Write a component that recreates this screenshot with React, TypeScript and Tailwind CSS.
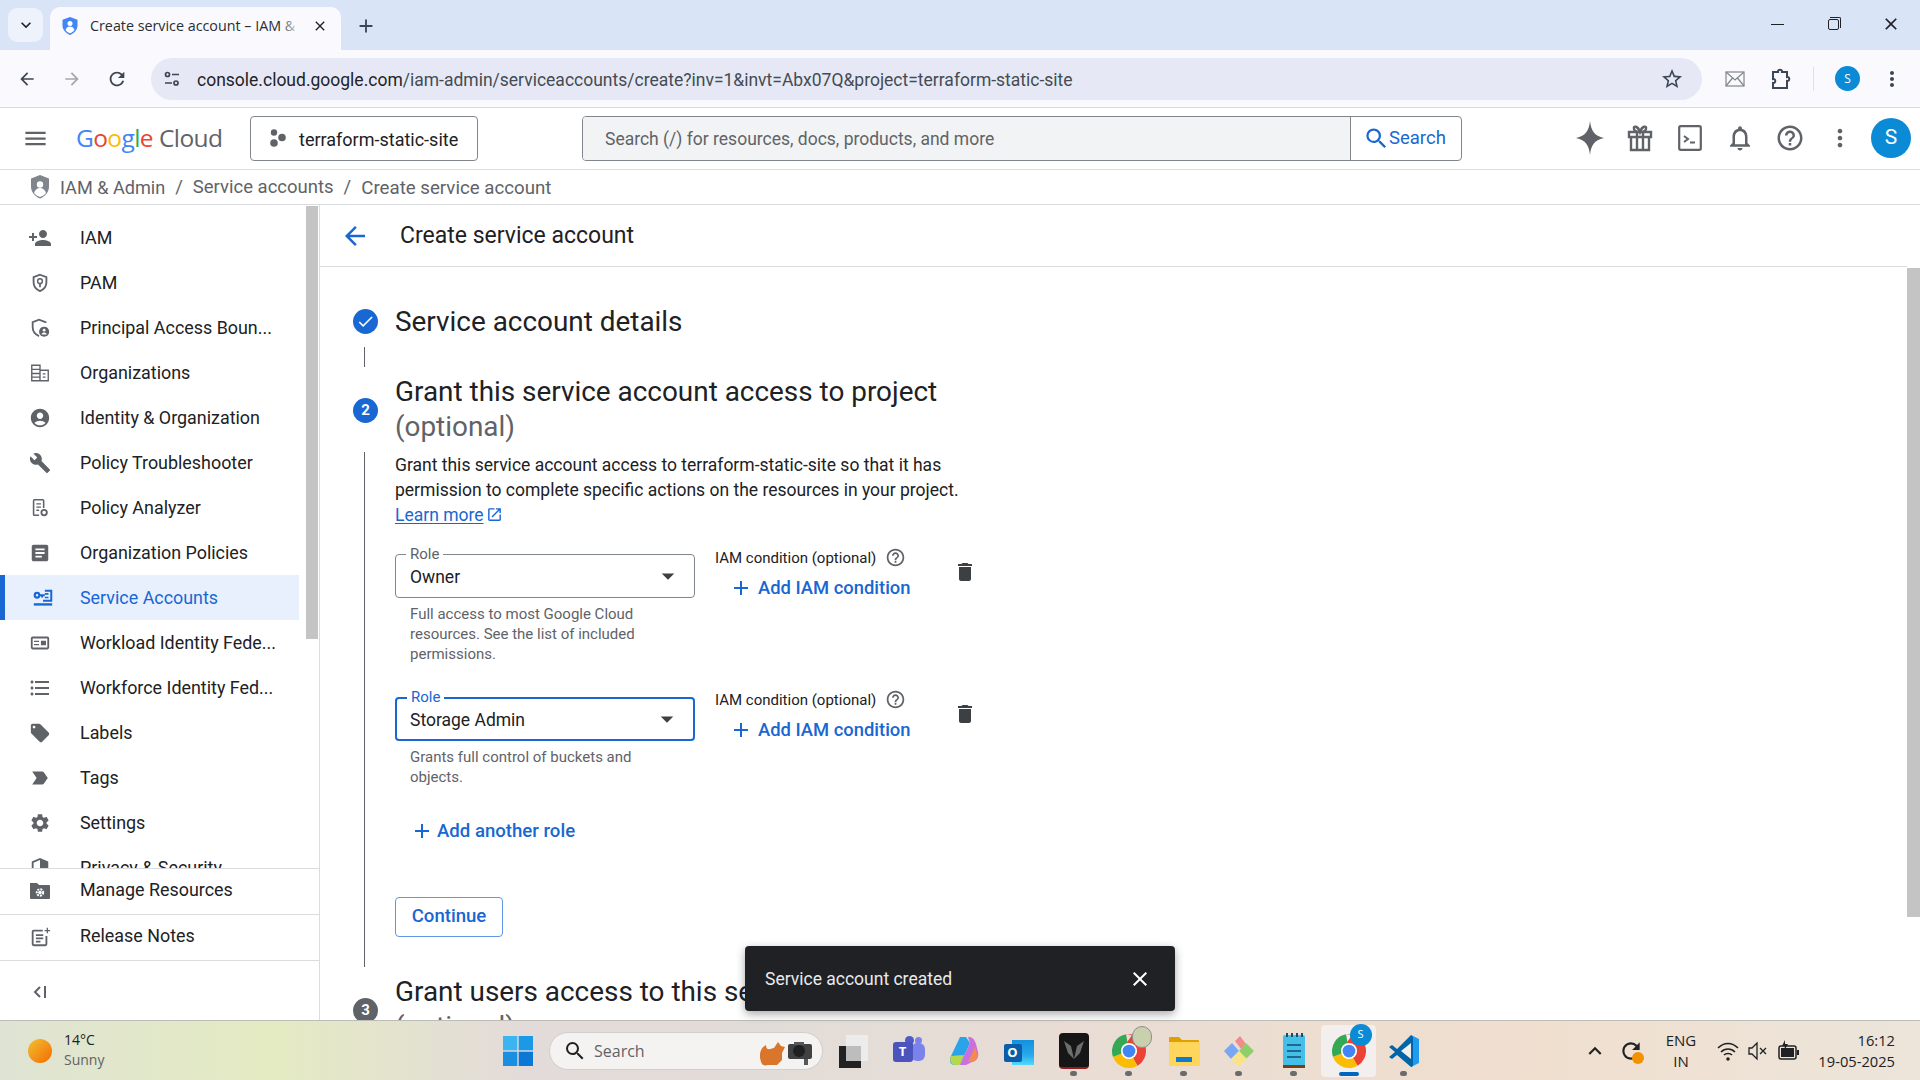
import type { ReactNode } from "react";
import {
	MdAccountCircle,
	MdAdd,
	MdArrowBack,
	MdArrowDropDown,
	MdArticle,
	MdBuild,
	MdCheck,
	MdClose,
	MdDelete,
	MdFormatListBulleted,
	MdHelpOutline,
	MdLabelImportant,
	MdLocalOffer,
	MdMenu,
	MdMoreVert,
	MdOpenInNew,
	MdOutlineNotifications,
	MdPersonAdd,
	MdRefresh,
	MdSearch,
	MdSecurity,
	MdSettings,
	MdStarBorder,
	MdKeyboardArrowDown,
	MdKeyboardArrowUp,
	MdArrowForward,
} from "react-icons/md";

const grey = "#5f6368";

function PamIcon() {
	return (
		<svg width="22" height="22" viewBox="0 0 24 24" fill="none">
			<path d="M12 3l7 2.6v5.6c0 4.4-3 8-7 9.6-4-1.6-7-5.2-7-9.6V5.6z" stroke={grey} strokeWidth="2" />
			<circle cx="12" cy="10" r="2.6" stroke={grey} strokeWidth="1.6" />
			<path d="M12 12.5v4" stroke={grey} strokeWidth="1.8" />
		</svg>
	);
}

function BoundaryIcon() {
	return (
		<svg width="22" height="22" viewBox="0 0 24 24" fill="none">
			<path d="M18 6.5V5.6L11 3 4 5.6v5.6c0 4.4 3 8 7 9.6" stroke={grey} strokeWidth="2" />
			<circle cx="16.5" cy="16" r="5.5" fill={grey} />
			<circle cx="16.5" cy="14.4" r="1.5" fill="#fff" />
			<path d="M13.6 19c.5-1.500 1.700-2.200 2.900-2.200s2.400.7 2.900 2.200z" fill="#fff" />
		</svg>
	);
}

function OrgIcon() {
	return (
		<svg width="22" height="22" viewBox="0 0 24 24" fill="none" stroke={grey} strokeWidth="1.500">
			<path d="M3 3.500h9v17H3zM12 9h9v11.500h-9zM3 8h9M3 12.500h9M3 16.500h9M15 13h3M15 16.500h3" />
		</svg>
	);
}

function AnalyzerIcon() {
	return (
		<svg width="22" height="22" viewBox="0 0 24 24" fill="none" stroke={grey}>
			<path d="M11 20H6a1 1 0 0 1-1-1V4a1 1 0 0 1 1-1h9a1 1 0 0 1 1 1v8" strokeWidth="1.700" />
			<path d="M8 7.500h5M8 11h5M8 14.500h3" strokeWidth="1.500" />
			<circle cx="16.500" cy="17" r="3" strokeWidth="2" />
		</svg>
	);
}

function ServiceIcon() {
	return (
		<svg width="22" height="22" viewBox="0 0 24 24" fill="none" stroke="#1967d2">
			<circle cx="5.500" cy="9" r="2.500" strokeWidth="2.400" />
			<path d="M8 9h6M11 9v2.500M14 4h7v11h-9" strokeWidth="2.200" />
			<path d="M14 7.500h4M14 11.500h4" strokeWidth="1.800" />
			<path d="M2 19h20" strokeWidth="2.600" />
		</svg>
	);
}

function WorkloadIcon() {
	return (
		<svg width="22" height="22" viewBox="0 0 24 24" fill={grey}>
			<path
				d="M4 5h16a2 2 0 0 1 2 2v10a2 2 0 0 1-2 2H4a2 2 0 0 1-2-2V7a2 2 0 0 1 2-2zm0 2v10h16V7zm1.500 2.500h5.500V11H5.500zm0 3.500h5.500v1.500H5.500zm7.500-3.500h5.500v5H13z"
				fillRule="evenodd"
			/>
		</svg>
	);
}

function ManageIcon() {
	return (
		<svg width="24" height="24" viewBox="0 0 24 24" fill={grey}>
			<path d="M2 4h7l2 2h10a1 1 0 0 1 1 1v12a1 1 0 0 1-1 1H3a1 1 0 0 1-1-1z" />
			<circle cx="12" cy="13.500" r="3.200" fill="none" stroke="#fff" strokeWidth="2" strokeDasharray="2 1" />
			<circle cx="12" cy="13.500" r="1.800" fill="#fff" />
		</svg>
	);
}

function ReleaseIcon() {
	return (
		<svg width="22" height="22" viewBox="0 0 24 24" fill="none" stroke={grey}>
			<path d="M15 5H5a1 1 0 0 0-1 1v14a1 1 0 0 0 1 1h13a1 1 0 0 0 1-1v-9" strokeWidth="2" />
			<path d="M7.500 10h8M7.500 13.500h8M7.500 17h5" strokeWidth="2" />
			<path d="M20 2v6M17 5h6" strokeWidth="1.400" />
		</svg>
	);
}

function CollapseIcon() {
	return (
		<svg width="18" height="18" viewBox="0 0 18 18" fill="none" stroke={grey} strokeWidth="2">
			<path d="M9 4l-5 5 5 5M14 3v12" />
		</svg>
	);
}

function IamShieldIcon() {
	return (
		<svg width="22" height="26" viewBox="0 0 22 26">
			<path d="M11 1l9 3.500v8c0 5.500-3.800 10-9 12-5.200-2-9-6.500-9-12v-8z" fill="#80868b" />
			<circle cx="11" cy="10.500" r="3.200" fill="#fff" />
			<path d="M5 19c1-3.500 3.500-5 6-5s5 1.500 6 5c-1.500 2-3.500 3-6 4-2.500-1-4.500-2-6-4z" fill="#fff" />
		</svg>
	);
}

function ProjectIcon() {
	return (
		<svg width="18" height="20" viewBox="0 0 18 20" fill={grey}>
			<circle cx="5" cy="4.500" r="3.200" />
			<circle cx="5" cy="15" r="3.800" />
			<circle cx="13" cy="9.500" r="3.800" />
		</svg>
	);
}

function SparkIcon() {
	return (
		<svg width="30" height="36" viewBox="0 0 30 36" fill={grey}>
			<path d="M15 1c1.200 10 4 14.500 14 17-10 2.500-12.800 7-14 17-1.200-10-4-14.500-14-17 10-2.500 12.800-7 14-17z" />
		</svg>
	);
}

function GiftIcon() {
	return (
		<svg width="26" height="28" viewBox="0 0 26 28" fill="none" stroke={grey} strokeWidth="2.400">
			<path d="M2 8h22v5H2zM4 13v13h18V13M10 8v18M16 8v18M13 8C11 2 6 1 7 5c.3 1.500 2 3 6 3 4 0 5.700-1.500 6-3 1-4-4-3-6 3z" />
		</svg>
	);
}

function TerminalIcon() {
	return (
		<svg width="24" height="26" viewBox="0 0 24 26" fill="none" stroke={grey}>
			<rect x="1.200" y="1.200" width="21.600" height="23.600" rx="1.500" strokeWidth="2.200" />
			<path d="M6 11l4 3-4 3" strokeWidth="2" />
			<path d="M12 17.500h5" strokeWidth="2" />
		</svg>
	);
}

function MailIcon() {
	return (
		<svg width="20" height="16" viewBox="0 0 20 16" fill="none" stroke="#80868b" strokeWidth="1.200">
			<rect x="1" y="1" width="18" height="14" />
			<path d="M1 1l9 8 9-8M1 15l6.500-8M19 15l-6.500-8" />
		</svg>
	);
}

function PuzzleIcon() {
	return (
		<svg width="22" height="24" viewBox="0 0 22 24" fill="none" stroke="#3c4654" strokeWidth="2">
			<path d="M2 5h5c-.5-3 4.500-3 4 0h5v5c3-.5 3 4.500 0 4v7H2v-5c3 .5 3-4.500 0-4z" />
		</svg>
	);
}

function SiteIcon() {
	return (
		<svg width="18" height="18" viewBox="0 0 18 18" fill="none" stroke="#3c4654" strokeWidth="1.700">
			<circle cx="4.500" cy="4.500" r="2" />
			<path d="M9 4.500h7M2 13h7" />
			<circle cx="13" cy="13" r="2" />
		</svg>
	);
}

function TabFavicon() {
	return (
		<svg width="16" height="18" viewBox="0 0 16 18">
			<path d="M8 0l7.500 2.800v5.700c0 4-3 7.800-7.500 9.500C3.500 16.300.5 12.500.5 8.500V2.800z" fill="#4285f4" />
			<circle cx="8" cy="6.500" r="2.500" fill="#fff" />
			<path d="M3.500 13c.7-2.500 2.500-3.500 4.500-3.500s3.800 1 4.500 3.500c-1 1.500-2.700 2.500-4.500 3.300-1.800-.8-3.500-1.800-4.500-3.300z" fill="#fff" />
		</svg>
	);
}

function WindowBtn({ children }: { children: ReactNode }) {
	return <div className="w-[56px] flex justify-center">{children}</div>;
}

function BrowserChrome() {
	return (
		<div className="shrink-0 font-['Open_Sans',sans-serif]">
			<div className="h-[50px] bg-[#d9e4f6] flex items-end pl-[8px]">
				<div className="w-[35px] h-[34px] mb-[8px] rounded-[9px] bg-[#eef2fb] flex items-center justify-center">
					<MdKeyboardArrowDown size={20} color="#202124" />
				</div>
				<div className="ml-[7px] w-[291px] h-[43px] bg-[#f9f9fe] rounded-t-[10px] flex items-center pl-[12px] pb-[6px]">
					<TabFavicon />
					<span className="relative ml-[12px] w-[210px] overflow-hidden whitespace-nowrap text-[14.3px] text-[#2a2e33]">
						Create service account – IAM &amp;
						<span className="absolute right-0 top-0 h-full w-[20px] bg-gradient-to-r from-transparent to-[#f9f9fe]" />
					</span>
					<MdClose size={16} color="#202124" className="ml-[12px]" />
				</div>
				<MdAdd size={22} color="#3c4654" className="ml-[14px] mb-[13px]" />
				<div className="flex-1" />
				<div className="flex items-center self-start h-[50px] pr-[1px] pb-[2px]">
					<WindowBtn>
						<div className="w-[13px] h-px bg-[#202124]" />
					</WindowBtn>
					<WindowBtn>
						<div className="relative w-[11px] h-[11px] border border-[#202124] rounded-[2px]">
							<div className="absolute -top-[3px] left-[1px] w-[11px] h-[11px] border-t border-r border-[#202124] rounded-tr-[2px]" />
						</div>
					</WindowBtn>
					<div className="w-[2px]" />
					<WindowBtn>
						<MdClose size={20} color="#202124" />
					</WindowBtn>
				</div>
			</div>
			<div className="h-[58px] bg-[#f9f9fe] border-b border-[#d5dbe6] flex items-center">
				<div className="w-[151px] flex items-center pl-[17px] gap-[25px]">
					<MdArrowBack size={20} color="#3c4654" />
					<MdArrowForward size={20} color="#a3a7ad" />
					<MdRefresh size={22} color="#3c4654" className="-ml-[1px]" />
				</div>
				<div className="w-[1551px] h-[42px] rounded-full bg-[#e6e9f5] flex items-center pl-[12px] pr-[18px]">
					<SiteIcon />
					<span className="ml-[16px] pt-[3px] text-[17.5px] text-[#1f2328] font-['Roboto',sans-serif]">
						console.cloud.google.com
						<span className="text-[#444b53]">/iam-admin/serviceaccounts/create?inv=1&amp;invt=Abx07Q&amp;project=terraform-static-site</span>
					</span>
					<div className="flex-1" />
					<MdStarBorder size={24} color="#3c4654" />
				</div>
				<div className="flex items-center ml-[23px]">
					<MailIcon />
					<div className="ml-[26px]">
						<PuzzleIcon />
					</div>
					<div className="ml-[20px] w-px h-[24px] bg-[#d3e3fd]" />
					<div className="ml-[21px] w-[25px] h-[25px] rounded-full bg-[#0b8bd6] text-white text-[12px] flex items-center justify-center">
						S
					</div>
					<MdMoreVert size={24} color="#3c4654" className="ml-[20px]" />
				</div>
			</div>
		</div>
	);
}

function GoogleLogo() {
	return (
		<div className="flex items-baseline text-[24.5px] tracking-[-0.6px] font-['Open_Sans',sans-serif] leading-none">
			<span className="text-[#4285f4]">G</span>
			<span className="text-[#ea4335]">o</span>
			<span className="text-[#fbbc04]">o</span>
			<span className="text-[#4285f4]">g</span>
			<span className="text-[#34a853]">l</span>
			<span className="text-[#ea4335]">e</span>
			<span className="ml-[6px] text-[#5f6368]">Cloud</span>
		</div>
	);
}

function ConsoleHeader() {
	return (
		<div className="shrink-0 h-[62px] border-b border-[#dadce0] bg-white flex items-center pl-[22px] pb-[1px]">
			<MdMenu size={27} color={grey} />
			<div className="ml-[27px] w-[147px]">
				<GoogleLogo />
			</div>
			<div className="ml-[27px] w-[228px] h-[45px] border border-[#80868b] rounded-[4px] flex items-center pl-[18px]">
				<ProjectIcon />
				<span className="ml-[12px] pt-[2px] text-[18px] text-[#202124]">terraform-static-site</span>
			</div>
			<div className="ml-[104px] w-[880px] h-[45px] border border-[#80868b] rounded-[4px] flex overflow-hidden">
				<div className="flex-1 bg-[#f1f3f4] border-r border-[#80868b] flex items-center pl-[22px] pt-[3px] text-[17.5px] text-[#5f6368]">
					Search (/) for resources, docs, products, and more
				</div>
				<div className="w-[110px] flex items-center pl-[12px] text-[#1967d2] text-[18.5px]">
					<MdSearch size={27} />
					<span className="-ml-[1px] pt-[1px]">Search</span>
				</div>
			</div>
			<div className="ml-[113px]">
				<SparkIcon />
			</div>
			<div className="ml-[22px] flex items-center">
				<GiftIcon />
			</div>
			<div className="ml-[25px]">
				<TerminalIcon />
			</div>
			<MdOutlineNotifications size={30} color={grey} className="ml-[23px]" />
			<MdHelpOutline size={30} color={grey} className="ml-[20px]" />
			<MdMoreVert size={28} color={grey} className="ml-[21px]" />
			<div className="ml-[17px] w-[40px] h-[40px] rounded-full bg-[#0b8bd6] text-white text-[21px] flex items-center justify-center">
				S
			</div>
		</div>
	);
}

function Breadcrumb() {
	return (
		<div className="shrink-0 h-[35px] border-b border-[#dadce0] bg-white flex items-center pl-[29px] text-[18.5px] text-[#5f6368]">
			<IamShieldIcon />
			<span className="ml-[9px] pt-[2px] text-[18.1px]">IAM &amp; Admin</span>
			<span className="mx-[10px] pt-[2px]">/</span>
			<span className="pt-[2px]">Service accounts</span>
			<span className="mx-[10px] pt-[2px]">/</span>
			<span className="pt-[2px] text-[18.7px]">Create service account</span>
		</div>
	);
}

const navItems: { label: string; icon: ReactNode; active?: boolean }[] = [
	{ label: "IAM", icon: <MdPersonAdd size={24} color={grey} /> },
	{ label: "PAM", icon: <PamIcon /> },
	{ label: "Principal Access Boun...", icon: <BoundaryIcon /> },
	{ label: "Organizations", icon: <OrgIcon /> },
	{ label: "Identity & Organization", icon: <MdAccountCircle size={22} color={grey} /> },
	{ label: "Policy Troubleshooter", icon: <MdBuild size={22} color={grey} /> },
	{ label: "Policy Analyzer", icon: <AnalyzerIcon /> },
	{ label: "Organization Policies", icon: <MdArticle size={22} color={grey} /> },
	{ label: "Service Accounts", icon: <ServiceIcon />, active: true },
	{ label: "Workload Identity Fede...", icon: <WorkloadIcon /> },
	{ label: "Workforce Identity Fed...", icon: <MdFormatListBulleted size={24} color={grey} /> },
	{ label: "Labels", icon: <MdLocalOffer size={22} color={grey} /> },
	{ label: "Tags", icon: <MdLabelImportant size={22} color={grey} /> },
	{ label: "Settings", icon: <MdSettings size={22} color={grey} /> },
	{ label: "Privacy & Security", icon: <MdSecurity size={22} color={grey} /> },
];

function Sidebar() {
	return (
		<aside className="w-[320px] shrink-0 border-r border-[#dadce0] flex flex-col text-[17.9px] text-[#202124]">
			<div className="h-[664px] shrink-0 overflow-hidden flex border-b border-[#dadce0]">
				<div className="w-[299px] pt-[10px]">
					{navItems.map((item) => (
						<div
							key={item.label}
							className={`h-[45px] flex items-center whitespace-nowrap ${
								item.active ? "bg-[#e8f0fe] text-[#1967d2] border-l-[5px] border-[#1967d2]" : ""
							}`}
						>
							<div className={`flex justify-center ${item.active ? "w-[75px]" : "w-[80px]"}`}>{item.icon}</div>
							<span className="pt-[2px]">{item.label}</span>
						</div>
					))}
				</div>
				<div className="ml-[7px] w-[12px]">
					<div className="mt-[1px] h-[433px] bg-[#c4c4c4]" />
				</div>
			</div>
			<div className="h-[46px] shrink-0 border-b border-[#dadce0] flex items-center pb-[2px]">
				<div className="w-[80px] flex justify-center">
					<ManageIcon />
				</div>
				Manage Resources
			</div>
			<div className="h-[46px] shrink-0 border-b border-[#dadce0] flex items-center pb-[2px]">
				<div className="w-[80px] flex justify-center">
					<ReleaseIcon />
				</div>
				Release Notes
			</div>
			<div className="pl-[31px] pt-[22px]">
				<CollapseIcon />
			</div>
		</aside>
	);
}

function RoleRow({ role, help, focused }: { role: string; help: string[]; focused?: boolean }) {
	return (
		<div className="flex items-start">
			<div className="w-[300px]">
				<div
					className={`relative h-[44px] rounded-[4px] flex items-center pr-[11px] text-[#202124] ${
						focused ? "border-2 border-[#1967d2] pl-[13px]" : "border border-[#80868b] pl-[14px]"
					}`}
				>
					<span
						className={`absolute left-[10px] bg-white px-[4px] text-[15px] leading-[20px] ${
							focused ? "-top-[12px] text-[#1967d2]" : "-top-[11px] text-[#5f6368]"
						}`}
					>
						Role
					</span>
					<span className="flex-1 pt-[2px]">{role}</span>
					<MdArrowDropDown size={30} color="#3c4043" />
				</div>
				<div className="mt-[6px] pl-[15px] text-[15px] leading-[20px] text-[#5f6368]">
					{help.map((line) => (
						<div key={line}>{line}</div>
					))}
				</div>
			</div>
			<div className={`ml-[20px] w-[238px] ${focused ? "-mt-[7px]" : "-mt-[6px]"}`}>
				<div className="flex items-center h-[20px] text-[15px] text-[#202124] leading-[20px]">
					IAM condition (optional)
					<MdHelpOutline size={21} color={grey} className="ml-[9px] -mt-[2px]" />
				</div>
				<div className="mt-[8px] h-[24px] flex items-center pl-[14px] text-[18.4px] text-[#1967d2] font-medium">
					<MdAdd size={24} />
					<span className="ml-[5px]">Add IAM condition</span>
				</div>
			</div>
			<MdDelete size={24} color="#3c4043" className={focused ? "mt-[5px]" : "mt-[6px]"} />
		</div>
	);
}

function StepCircle({ children, color = "#1967d2" }: { children: ReactNode; color?: string }) {
	return (
		<div
			className="w-[25px] h-[25px] shrink-0 rounded-full text-white text-[15px] font-bold flex items-center justify-center"
			style={{ backgroundColor: color }}
		>
			{children}
		</div>
	);
}

function CreateForm() {
	return (
		<div className="flex-1 min-w-0 flex flex-col">
			<div className="h-[62px] shrink-0 border-b border-[#dadce0] flex items-center pl-[20px] text-[23px] text-[#202124]">
				<MdArrowBack size={30} color="#1967d2" />
				<span className="ml-[30px] pt-[2px]">Create service account</span>
			</div>
			<div className="flex-1 min-h-0 overflow-hidden pl-[33px] pt-[33px] text-[17.5px] text-[#202124]">
				<div className="h-[42px] flex items-center gap-[17px]">
					<StepCircle>
						<MdCheck size={19} />
					</StepCircle>
					<span className="pt-[2px] text-[27.9px]">Service account details</span>
				</div>
				<div className="ml-[11px] mt-[5px] w-px h-[20px] bg-[#5f6368]" />
				<div className="mt-[7px] flex items-center gap-[17px] w-[700px]">
					<div className="mt-[2px]">
						<StepCircle>2</StepCircle>
					</div>
					<div className="text-[27.9px] leading-[35px]">
						Grant this service account access to project
						<div className="text-[#5f6368]">(optional)</div>
					</div>
				</div>
				<div className="ml-[11px] mt-[8px] h-[515px] border-l border-[#5f6368] pl-[30px]">
					<div className="w-[590px] pt-[1px] leading-[25px]">
						Grant this service account access to terraform-static-site so that it has permission to complete specific
						actions on the resources in your project.
						<div className="flex items-center text-[#1967d2]">
							<span className="underline underline-offset-2">Learn more</span>
							<MdOpenInNew size={17} className="ml-[2px] -mt-[3px]" />
						</div>
					</div>
					<div className="mt-[26px]">
						<RoleRow
							role="Owner"
							help={["Full access to most Google Cloud", "resources. See the list of included", "permissions."]}
						/>
					</div>
					<div className="mt-[33px]">
						<RoleRow role="Storage Admin" help={["Grants full control of buckets and", "objects."]} focused />
					</div>
					<div className="mt-[26px] h-[36px] flex items-center pl-[15px] text-[18.6px] text-[#1967d2] font-medium">
						<MdAdd size={24} />
						<span className="ml-[3px] pt-[2px]">Add another role</span>
					</div>
					<div className="mt-[48px] w-[108px] h-[40px] border border-[#5f97e6] rounded-[4px] flex items-center justify-center text-[18.6px] text-[#1967d2] font-medium">
						Continue
					</div>
				</div>
				<div className="mt-[7px] flex items-center gap-[17px] w-[700px]">
					<div className="mt-[3px]">
						<StepCircle color="#5f6368">3</StepCircle>
					</div>
					<div className="text-[27.9px] leading-[35px]">
						Grant users access to this service account
						<div className="text-[#5f6368]">(optional)</div>
					</div>
				</div>
			</div>
		</div>
	);
}

function Toast() {
	return (
		<div className="absolute left-[745px] top-[946px] w-[430px] h-[65px] rounded-[4px] bg-[#202124] shadow-[0_3px_10px_rgba(0,0,0,0.35)] flex items-center pl-[20px] pr-[23px] text-[17.5px] text-[#e8eaed]">
			<span className="flex-1 pt-[2px]">Service account created</span>
			<MdClose size={24} color="#fff" />
		</div>
	);
}

function ChromeLogo({ badge }: { badge?: ReactNode }) {
	return (
		<div className="relative">
			<svg width="34" height="34" viewBox="0 0 40 40" fill="none">
				<g transform="rotate(-100 20 20)" strokeWidth="18">
					<circle cx="20" cy="20" r="11" stroke="#ea4335" pathLength="360" strokeDasharray="160 200" />
					<circle cx="20" cy="20" r="11" stroke="#fbbc04" pathLength="360" strokeDasharray="100 260" strokeDashoffset="-160" />
					<circle cx="20" cy="20" r="11" stroke="#34a853" pathLength="360" strokeDasharray="100 260" strokeDashoffset="-260" />
				</g>
				<circle cx="20" cy="20" r="9.500" fill="#fff" />
				<circle cx="20" cy="20" r="7.500" fill="#4285f4" />
			</svg>
			{badge}
		</div>
	);
}

function TaskItem({ children, mark }: { children: ReactNode; mark?: "dot" | "active" }) {
	return (
		<div
			className={`relative w-[55px] h-[52px] flex items-center justify-center rounded-[4px] ${
				mark === "active" ? "bg-[#f3efee]" : ""
			}`}
		>
			{children}
			{mark === "dot" && <div className="absolute bottom-[1px] w-[7px] h-[5px] rounded-full bg-[#6b6b6b]" />}
			{mark === "active" && <div className="absolute bottom-[1px] w-[20px] h-[4px] rounded-full bg-[#0067c0]" />}
		</div>
	);
}

function Taskbar() {
	return (
		<div className="shrink-0 h-[60px] border-t border-[#bdbdb8] bg-[linear-gradient(90deg,#dfe3d3_0%,#e4ebc2_14%,#e3dbd9_27%,#e2dcd8_40%,#ecddd2_65%,#f0dfcf_80%,#ece5da_100%)] flex items-center font-['Open_Sans',sans-serif]">
			<div className="w-[503px] flex items-center pl-[28px] shrink-0">
				<div className="w-[24px] h-[24px] rounded-full bg-[linear-gradient(135deg,#f1c232,#f56a00)]" />
				<div className="ml-[12px] -mt-[2px] text-[14px] leading-[20px]">
					<div className="text-[#202124]">14°C</div>
					<div className="text-[#5f6368]">Sunny</div>
				</div>
			</div>
			<svg width="30" height="30" viewBox="0 0 30 30" className="shrink-0">
				<rect width="14.300" height="14.300" fill="#3cb4f2" />
				<rect x="15.700" width="14.300" height="14.300" fill="#1a9ae6" />
				<rect y="15.700" width="14.300" height="14.300" fill="#1a8fe0" />
				<rect x="15.700" y="15.700" width="14.300" height="14.300" fill="#0a78d4" />
			</svg>
			<div className="ml-[16px] w-[274px] h-[38px] shrink-0 rounded-full bg-[#f5f3f1] border border-[#cfcfcf] flex items-center pl-[13px] text-[16px] text-[#5f6368]">
				<MdSearch size={24} color="#202124" />
				<span className="ml-[7px] flex-1">Search</span>
				<svg width="62" height="34" viewBox="0 0 62 34" className="mr-[2px]">
					<path d="M4 30c-4-8-2-16 4-19 0 6 4 4 8 3l4-6 3 4 4 1-3 6v7l-5 5h-9c-3 1-5 0-6-1z" fill="#d9762b" />
					<rect x="30" y="10" width="24" height="15" rx="2" fill="#3f4143" />
					<circle cx="41" cy="17" r="6" fill="#1f2022" />
					<path d="M36 8h10v3H36zM46 25h4v6h-4z" fill="#55585b" />
				</svg>
			</div>
			<div className="ml-[3px] flex items-center">
				<TaskItem>
					<svg width="32" height="34" viewBox="0 0 32 34">
						<rect x="8" y="1" width="22" height="26" fill="#ececec" />
						<rect x="1" y="12" width="22" height="22" fill="#222" />
						<rect x="8" y="12" width="15" height="15" fill="#bdbdbd" />
					</svg>
				</TaskItem>
				<TaskItem>
					<div className="relative w-[32px] h-[30px]">
						<div className="absolute right-0 top-[7px] w-[14px] h-[18px] rounded-[6px] bg-[#7b83eb]" />
						<div className="absolute right-[3px] top-[1px] w-[7px] h-[7px] rounded-full bg-[#7b83eb]" />
						<div className="absolute left-[12px] top-[0px] w-[9px] h-[9px] rounded-full bg-[#5059c9]" />
						<div className="absolute left-[0px] top-[6px] w-[20px] h-[20px] rounded-[3px] bg-[#4b53bc] text-white text-[13px] font-bold flex items-center justify-center">
							T
						</div>
					</div>
				</TaskItem>
				<TaskItem>
					<svg width="32" height="32" viewBox="0 0 32 32">
						<path d="M12 2h6l4 6-10 22H7C2 30 1 26 3 21z" fill="#2aa4e8" />
						<path d="M3 21c-2 5 0 9 5 9h4l4-10z" fill="#b6d84c" />
						<path d="M20 2c5 0 6 2 8 7l2 8c1 5-1 9-6 10l-6 3h-6l10-22z" fill="#c96fe0" />
						<path d="M24 27c4-1 6-5 5-9l-2-6-7 15z" fill="#f48b4b" />
					</svg>
				</TaskItem>
				<TaskItem>
					<div className="relative w-[30px] h-[28px]">
						<div className="absolute right-0 top-[3px] w-[22px] h-[25px] bg-[linear-gradient(180deg,#1490df,#28a8ea_60%,#50d9ff)]" />
						<div className="absolute left-0 top-[7px] w-[18px] h-[18px] rounded-[2px] bg-[#0a5ea8] text-white text-[13px] font-bold flex items-center justify-center">
							O
						</div>
					</div>
				</TaskItem>
				<TaskItem mark="dot">
					<div className="w-[30px] h-[36px] rounded-[4px] bg-[#161616] border-b-2 border-[#9a1b1b] flex items-center justify-center">
						<svg width="22" height="22" viewBox="0 0 22 22" fill="#6d6d6d">
							<path d="M1 2l7 5 3 13-6-6zM21 2l-7 5-3 13 6-6z" />
						</svg>
					</div>
				</TaskItem>
				<TaskItem mark="dot">
					<ChromeLogo
						badge={
							<div className="absolute -right-[6px] -top-[8px] w-[20px] h-[22px] rounded-full bg-[#c9d0ae] border border-[#8f8f8f]" />
						}
					/>
				</TaskItem>
				<TaskItem mark="dot">
					<svg width="32" height="30" viewBox="0 0 32 30">
						<path d="M1 2a1 1 0 0 1 1-1h9l3 3h16a1 1 0 0 1 1 1v3H1z" fill="#e0a100" />
						<rect x="1" y="6" width="31" height="24" fill="#ffd65c" />
						<path d="M8 21h16v5H8z" fill="#0e7ad1" />
					</svg>
				</TaskItem>
				<TaskItem mark="dot">
					<svg width="32" height="32" viewBox="0 0 32 32">
						<path d="M1 16l8-8 7 8-8 8z" fill="#7aa7f2" />
						<path d="M12 6l5-5 6 8-5 5z" fill="#ef8c8c" />
						<path d="M16 16l7-8 8 8-8 8z" fill="#8fcf6b" />
						<path d="M8 24l8-8 8 8-8 8z" fill="#f8e38a" />
					</svg>
				</TaskItem>
				<TaskItem mark="dot">
					<svg width="24" height="36" viewBox="0 0 24 36">
						<rect x="1" y="2" width="22" height="32" rx="2" fill="#45bfe8" />
						<path d="M1 32h22v3H1z" fill="#7a3e12" />
						<path d="M5 11h14v2H5zM5 17h14v2H5zM5 23h14v2H5z" fill="#1c6a94" />
						<path d="M4 0h2v4H4zM9 0h2v4H9zM14 0h2v4h-2zM19 0h2v4h-2z" fill="#12506f" />
					</svg>
				</TaskItem>
				<TaskItem mark="active">
					<ChromeLogo
						badge={
							<div className="absolute -right-[6px] -top-[10px] w-[22px] h-[22px] rounded-full bg-[#0b8bd6] text-white text-[11px] flex items-center justify-center">
								S
							</div>
						}
					/>
				</TaskItem>
				<TaskItem mark="dot">
					<svg width="32" height="34" viewBox="0 0 32 34">
						<path d="M23 1l8 4v24l-8 4z" fill="#1f9cf0" />
						<path d="M23 1L9 15l-5-4-3 2 6 5-6 5 3 2 5-4 14 12 2-1V3z" fill="#0065a9" />
						<path d="M23 9L13 17l10 8z" fill="#f3efe9" />
					</svg>
				</TaskItem>
			</div>
			<div className="flex-1" />
			<div className="flex items-center text-[#202124] shrink-0">
				<MdKeyboardArrowUp size={26} />
				<div className="ml-[10px] relative w-[26px] h-[26px]">
					<MdRefresh size={26} color="#202124" />
					<div className="absolute right-0 bottom-0 w-[12px] h-[12px] rounded-full bg-[#f39200]" />
				</div>
				<div className="ml-[21px] w-[32px] text-center text-[15px] leading-[21px]">
					ENG
					<br />
					IN
				</div>
				<svg width="22" height="20" viewBox="0 0 22 20" fill="none" stroke="#202124" strokeWidth="1.600" className="ml-[20px]">
					<path d="M1 7c6-6 14-6 20 0M4 11c4-4 10-4 14 0M7 14c2-2 6-2 8 0" />
					<circle cx="11" cy="18" r="1" fill="#202124" />
				</svg>
				<svg width="20" height="20" viewBox="0 0 20 20" fill="none" stroke="#202124" strokeWidth="1.300" className="ml-[9px]">
					<path d="M1 7h3l5-5v16l-5-5H1zM12 7l6 6M18 7l-6 6" />
				</svg>
				<svg width="22" height="22" viewBox="0 0 22 22" className="ml-[9px]">
					<rect x="2" y="6" width="17" height="13" rx="2" fill="none" stroke="#202124" strokeWidth="1.500" />
					<rect x="4" y="8" width="13" height="9" fill="#202124" />
					<path d="M20 10h2v5h-2zM8 0L5 6h3l-1 5 4-7H8z" fill="#202124" />
				</svg>
				<div className="ml-[6px] mr-[25px] w-[90px] text-right text-[14.7px] leading-[21px]">
					16:12
					<br />
					19-05-2025
				</div>
			</div>
		</div>
	);
}

export default function App() {
	return (
		<div className="relative w-[1920px] h-[1080px] overflow-hidden bg-white flex flex-col font-['Roboto',sans-serif]">
			<BrowserChrome />
			<ConsoleHeader />
			<Breadcrumb />
			<div className="flex-1 min-h-0 flex">
				<Sidebar />
				<CreateForm />
				<div className="w-[13px] shrink-0 pt-[63px]">
					<div className="h-[649px] bg-[#c4c4c4]" />
				</div>
			</div>
			<Taskbar />
			<Toast />
		</div>
	);
}
